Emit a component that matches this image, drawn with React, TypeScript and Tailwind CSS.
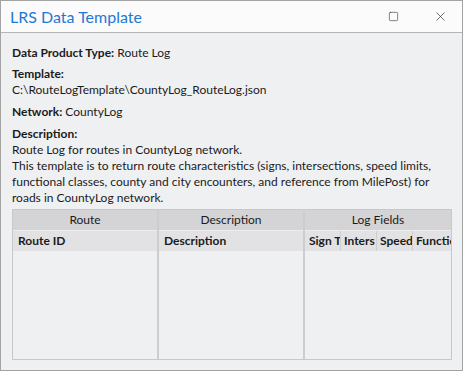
import { Square, X } from "lucide-react";

const font = { fontFamily: '"Segoe UI", Lato, "Open Sans", sans-serif' };

function App() {
  return (
    <div className="w-[464px] h-[372px] bg-white" style={font}>
      <div className="w-[463px] h-[371px] border border-[#a3a3a3] flex flex-col bg-[#eff0f2]">
        <div className="h-[32px] shrink-0 bg-[#fbfbfb] border-b border-[#b5b5b5] flex items-center pl-[9px]">
          <div className="text-[16px] text-[#1e78d7] flex-1">LRS Data Template</div>
          <Square size={11} strokeWidth={1.3} className="text-[#333] mr-[34px]" />
          <X size={15} strokeWidth={1.1} className="text-[#333] mr-[14px]" />
        </div>
        <div className="flex-1 min-h-0 px-[11px] pt-[12px] text-[12px] text-[#1b1b1b] leading-[16px] flex flex-col">
          <div>
            <span className="font-bold">Data Product Type:</span> Route Log
          </div>
          <div className="mt-[5px] font-bold">Template:</div>
          <div>C:\RouteLogTemplate\CountyLog_RouteLog.json</div>
          <div className="mt-[6px]">
            <span className="font-bold">Network:</span> CountyLog
          </div>
          <div className="mt-[6px] font-bold">Description:</div>
          <div>Route Log for routes in CountyLog network.</div>
          <div className="w-[430px]">
            This template is to return route characteristics (signs, intersections, speed limits,
            functional classes, county and city encounters, and reference from MilePost) for roads
            in CountyLog network.
          </div>
          <div className="mt-[3px] mb-[10px] flex-1 w-[440px] border border-[#c8c8c8] flex">
            <div className="w-[146px] shrink-0 border-r-2 border-[#cdcdcd] flex flex-col">
              <div className="h-[20px] bg-[#d4d4d6] text-center leading-[19px]">Route</div>
              <div className="h-[21px] bg-[#e2e2e4] font-bold pl-[5px] leading-[19px] border-t border-[#eeeeee]">Route ID</div>
            </div>
            <div className="w-[146px] shrink-0 border-r-2 border-[#cdcdcd] flex flex-col">
              <div className="h-[20px] bg-[#d4d4d6] text-center leading-[19px]">Description</div>
              <div className="h-[21px] bg-[#e2e2e4] font-bold pl-[5px] leading-[19px] border-t border-[#eeeeee]">Description</div>
            </div>
            <div className="flex-1 min-w-0 flex flex-col">
              <div className="h-[20px] bg-[#d4d4d6] text-center leading-[19px]">Log Fields</div>
              <div className="h-[21px] bg-[#e2e2e4] font-bold leading-[19px] border-t border-[#eeeeee] flex">
                <div className="w-[36px] shrink-0 pl-[4px] overflow-hidden whitespace-nowrap border-r border-[#cfcfcf]">Sign Type</div>
                <div className="w-[36px] shrink-0 pl-[3px] overflow-hidden whitespace-nowrap border-r border-[#cfcfcf]">Inters</div>
                <div className="w-[36px] shrink-0 pl-[3px] overflow-hidden whitespace-nowrap border-r border-[#cfcfcf]">Speed</div>
                <div className="flex-1 min-w-0 pl-[3px] overflow-hidden whitespace-nowrap">Functional</div>
              </div>
            </div>
          </div>
        </div>
      </div>
    </div>
  );
}

export default App;
